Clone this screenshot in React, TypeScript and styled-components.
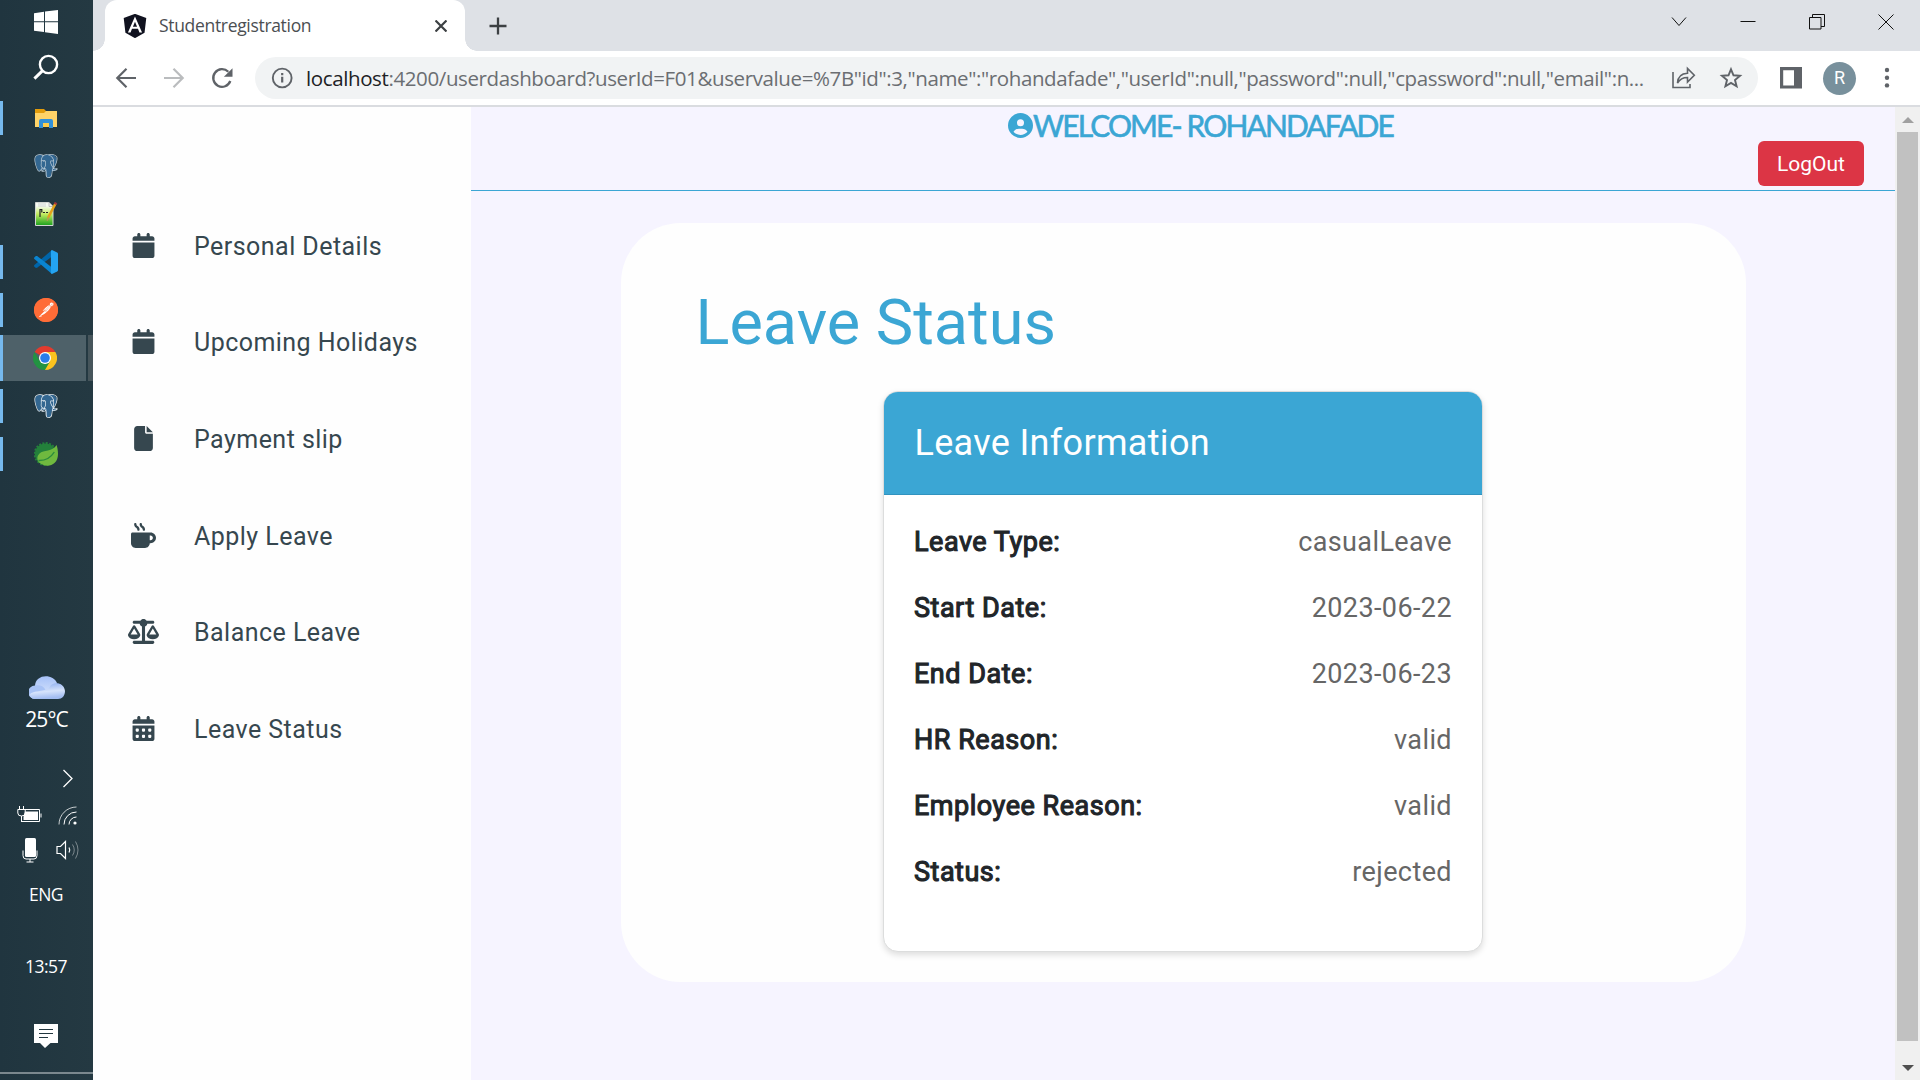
import React from 'react';
import styled, { createGlobalStyle } from 'styled-components';
import type { IconType } from 'react-icons';
import { FaCalendar, FaFile, FaMugHot, FaScaleBalanced, FaCalendarDays, FaCircleUser, FaAngular } from 'react-icons/fa6';
import { SiPostgresql, SiPostman } from 'react-icons/si';

const uiFont = '"Open Sans", "Noto Sans", sans-serif';
const pageFont = 'Roboto, "Liberation Sans", sans-serif';
const blue = '#3ba6d4';

const GlobalStyle = createGlobalStyle`
  *, *::before, *::after { box-sizing: border-box; }
  body { margin: 0; overflow: hidden; }
  svg { display: block; flex: none; }
`;

const Desktop = styled.div`
  display: flex;
  width: 1920px;
  height: 1080px;
  overflow: hidden;
`;

/* ---------- Taskbar ---------- */

const Taskbar = styled.aside`
  display: flex;
  flex-direction: column;
  flex: none;
  width: 93px;
  height: 1080px;
  background: linear-gradient(90deg, #20353f, #243942);
  color: #fff;
  font-family: ${uiFont};
`;

const StartSlot = styled.div<{ $height: number }>`
  display: grid;
  place-items: center;
  height: ${(p) => p.$height}px;
  padding-right: 1px;
`;

const AppList = styled.div`
  margin-top: 11px;
`;

const AppSlot = styled.div<{ $open?: boolean; $active?: boolean }>`
  display: grid;
  place-items: center;
  width: ${(p) => (p.$active ? 86 : 92)}px;
  height: ${(p) => (p.$active ? 46 : 34)}px;
  margin: ${(p) => (p.$active ? '1px 0' : '0 0 14px')};
  padding-right: ${(p) => (p.$active ? 0 : 3)}px;
  border-left: 3px solid ${(p) => (p.$open ? '#76b9ed' : 'transparent')};
  background: ${(p) => (p.$active ? '#4e6169' : 'transparent')};
`;

const ActiveRow = styled.div`
  display: flex;
  justify-content: space-between;
  align-items: center;
  height: 48px;
  margin: -7px 0 7px;
`;

const StackedEdge = styled.div`
  width: 5px;
  height: 46px;
  background: #46555b;
`;

const Weather = styled.div`
  display: flex;
  flex-direction: column;
  align-items: center;
  gap: 4px;
  margin-top: 191px;
`;

const Temperature = styled.span`
  font-size: 21px;
  line-height: 30px;
  letter-spacing: -0.9px;
`;

const Tray = styled.div`
  display: grid;
  grid-template-columns: 28px 28px;
  grid-template-rows: 36px 38px 32px;
  justify-content: center;
  align-items: center;
  justify-items: center;
  column-gap: 10px;
  margin-top: 26px;
  padding-left: 4px;
`;

const TrayLabel = styled.div<{ $top: number }>`
  margin-top: ${(p) => p.$top}px;
  padding-right: 1px;
  font-size: 17.5px;
  line-height: 24px;
  letter-spacing: -0.5px;
  text-align: center;
`;

const Notifications = styled.div`
  display: flex;
  justify-content: center;
  height: 94px;
  margin-top: auto;
  padding: 46px 1px 0 0;
`;

const DesktopEdge = styled.div`
  height: 8px;
  border-top: 2px solid #7b888e;
`;

/* ---------- Browser ---------- */

const Browser = styled.div`
  display: flex;
  flex-direction: column;
  flex: 1;
  min-width: 0;
  background: #fff;
`;

const TabStrip = styled.div`
  display: flex;
  align-items: flex-end;
  height: 51px;
  background: #dee1e6;
`;

const TabCurve = styled.div<{ $side: 'left' | 'right' }>`
  width: 12px;
  height: 12px;
  background: radial-gradient(
    circle at ${(p) => (p.$side === 'left' ? '0 0' : '100% 0')},
    transparent 11.5px,
    #fff 12px
  );
`;

const Tab = styled.div`
  display: flex;
  align-items: center;
  width: 360px;
  height: 51px;
  padding: 0 18px;
  border-radius: 12px 12px 0 0;
  background: #fff;
`;

const TabTitle = styled.span`
  flex: 1;
  margin-left: 12px;
  padding-bottom: 1px;
  color: #4b4e52;
  font: 400 17.5px/24px ${uiFont};
  letter-spacing: -0.32px;
`;

const NewTab = styled.div`
  display: grid;
  place-items: center;
  width: 18px;
  height: 51px;
  margin-left: 12px;
`;

const WindowControls = styled.div`
  display: flex;
  align-items: flex-start;
  gap: 53px;
  height: 51px;
  margin-left: auto;
  padding: 14px 26px 0 0;
`;

const Toolbar = styled.div`
  display: flex;
  align-items: center;
  height: 56px;
  padding: 0 18px 0 21px;
  border-bottom: 2px solid #dadce0;
`;

const NavButtons = styled.div`
  display: flex;
  gap: 24px;
  margin-right: 21px;
`;

const Omnibox = styled.div`
  display: flex;
  flex: none;
  align-items: center;
  width: 1503px;
  height: 42px;
  padding: 0 15px;
  border-radius: 21px;
  background: #f1f3f4;
`;

const Address = styled.div`
  flex: 1;
  margin-left: 12px;
  color: #6b6e72;
  font: 400 20.5px/30px ${uiFont};
  letter-spacing: -0.385px;
  white-space: nowrap;
`;

const Host = styled.span`
  color: #202124;
`;

const OmniboxActions = styled.div`
  display: flex;
  gap: 23px;
`;

const ToolbarActions = styled.div`
  display: flex;
  align-items: center;
  gap: 20px;
  margin-left: 21px;
`;

const Avatar = styled.div`
  display: grid;
  place-items: center;
  width: 33px;
  height: 33px;
  border-radius: 50%;
  background: #78909c;
  color: #fff;
  font: 400 18px/1 ${pageFont};
`;

/* ---------- Page ---------- */

const Viewport = styled.div`
  display: flex;
  flex: 1;
  min-height: 0;
  font-family: ${pageFont};
`;

const Sidebar = styled.nav`
  flex: none;
  width: 378px;
  padding-top: 91px;
  background: #fefefe;
`;

const MenuItem = styled.div`
  display: flex;
  align-items: center;
  height: 96.6px;
  padding-left: 30px;
  color: #36474f;
  font-size: 25px;
  letter-spacing: 0.46px;
`;

const MenuIcon = styled.span`
  display: flex;
  justify-content: center;
  width: 40px;
  margin: 0 31px 2px 0;
`;

const Main = styled.main`
  flex: 1;
  background: #f6f4ff;
`;

const Header = styled.header`
  display: flex;
  flex-direction: column;
  height: 84px;
  border-bottom: 1px solid ${blue};
`;

const Welcome = styled.div`
  display: flex;
  align-items: center;
  height: 34px;
  padding: 3px 0 0 537px;
  color: ${blue};
  font: 400 30px/34px Lato, sans-serif;
  letter-spacing: -1.87px;
  text-transform: uppercase;
  white-space: pre;
  -webkit-text-stroke: 0.6px ${blue};

  svg { stroke: none; }
`;

const WelcomeText = styled.span`
  margin-bottom: 2px;
`;

const LogOut = styled.button`
  align-self: flex-end;
  width: 106px;
  height: 45px;
  margin-right: 31px;
  padding: 1px 0 0;
  border: 0;
  border-radius: 6px;
  background: #dc3545;
  color: #fff;
  font: 400 21px/44px ${pageFont};
`;

const Panel = styled.section`
  width: 1125px;
  height: 759px;
  margin: 32px 0 0 150px;
  padding: 62px 76px 0 74px;
  border-radius: 60px;
  background: #fefefe;
`;

const PanelTitle = styled.h1`
  margin: 0 0 30px;
  padding-left: 0.5px;
  color: ${blue};
  font-size: 63px;
  font-weight: 400;
  line-height: 76px;
`;

const InfoCard = styled.article`
  width: 600px;
  height: 561px;
  margin: 0 auto;
  overflow: hidden;
  border: 1px solid #dcdddd;
  border-radius: 15px;
  background: #fff;
  box-shadow: 0 3px 6px rgba(0, 0, 0, 0.13);
`;

const InfoHeader = styled.h2`
  height: 103px;
  margin: 0;
  padding: 1px 31px 0;
  border-bottom: 1px solid #3193bf;
  background: ${blue};
  color: #fff;
  font-size: 36px;
  font-weight: 400;
  line-height: 101px;
  letter-spacing: 0.32px;
`;

const InfoBody = styled.dl`
  margin: 0;
  padding: 14px 29.5px 0 30.5px;
`;

const InfoRow = styled.div`
  display: flex;
  justify-content: space-between;
  align-items: center;
  height: 66px;
  font-size: 27px;
`;

const Label = styled.dt`
  color: #212529;
  letter-spacing: 0.52px;
  -webkit-text-stroke: 1.1px #212529;
`;

const Value = styled.dd`
  margin: 0;
  color: #666;
  letter-spacing: 0.4px;
`;

const Scrollbar = styled.div`
  display: flex;
  flex-direction: column;
  align-items: center;
  justify-content: space-between;
  width: 25px;
  padding: 10px 0 9px;
  background: #f0f0f0;
`;

const Thumb = styled.div`
  width: 21px;
  height: 909px;
  margin: 9px 0 auto;
  background: #c1c1c1;
`;

/* ---------- Drawings ---------- */

const WindowsLogo = () => (
  <svg width="24" height="24" viewBox="0 0 24 24" fill="#fff">
    <path d="M0 3.2 10 1.8V11.3H0zM11 1.6 24 0V11.3H11zM0 12.3H10V22.1L0 20.8zM11 12.3H24V24L11 22.3z" />
  </svg>
);

const SearchGlyph = () => (
  <svg width="26" height="26" viewBox="0 0 26 26" fill="none" stroke="#fff" strokeWidth="2.4">
    <circle cx="15.5" cy="10.5" r="8.6" />
    <path d="M9.6 16.6 1.4 24.6" strokeWidth="3" />
  </svg>
);

const FolderIcon = () => (
  <svg width="24" height="24" viewBox="0 0 24 24">
    <path d="M1 3h9l2 2v4H1z" fill="#e39c0b" />
    <path d="M1 7h9l2-2h11v16H1z" fill="#ffd368" />
    <path d="M5 22v-7q0-2 2-2h10q2 0 2 2v7h-4v-5H9v5z" fill="#3290d8" />
    <path d="M9 17h6v4H9z" fill="#ffcd4d" />
  </svg>
);

const ElephantLayers = styled.div`
  position: relative;
  width: 24px;
  height: 24px;

  svg { position: absolute; inset: 0; }
`;

const ElephantIcon = ({ line }: { line: string }) => (
  <ElephantLayers>
    <svg width="24" height="24" viewBox="0 0 24 24">
      <path d="M5 .7 9 1.2 12 1 16 .5l4 .7 2.8 3-.6 5-2.5 5 2.8.8-2 2-3 .4-.5 4.5-2 1.6-2.6-.4L11.6 16l-3 .6-.8-1.2L5 17.6 3 14 .9 7 1.5 2.6z" fill="#336791" />
    </svg>
    <SiPostgresql size={24} color={line} />
  </ElephantLayers>
);

const NotepadIcon = () => (
  <svg width="24" height="24" viewBox="0 0 24 24">
    <defs>
      <linearGradient id="sheet" x1="0" y1="0" x2="0" y2="1">
        <stop offset="0.15" stopColor="#f7fbf4" />
        <stop offset="0.5" stopColor="#c4ec60" />
        <stop offset="1" stopColor="#199f1d" />
      </linearGradient>
    </defs>
    <path d="M1.5.5H15l4 4V23.5H1.5z" fill="url(#sheet)" stroke="#d3d5d3" />
    <path d="M15 .5v4h4" fill="#eee" stroke="#aaa" strokeWidth=".7" />
    <path d="M4 2h8M4 4h8" stroke="#b9bdc0" strokeWidth=".6" />
    <path d="M6 15V7.500h1.800v3M9 10.500h2M12 10.500h2" stroke="#222" strokeWidth="1.2" fill="none" />
    <path d="M21.5 1.5 14 16" stroke="#e3a21c" strokeWidth="2.6" />
    <path d="m21 2.4 1-1.9" stroke="#a3353b" strokeWidth="2.8" />
    <path d="m14.7 15-1.6 3.8" stroke="#be945a" strokeWidth="1.3" />
  </svg>
);

const CodeIcon = () => (
  <svg width="24" height="24" viewBox="0 0 24 24">
    <path d="M18 0v6.600L3.100 17.800 1.900 17.900.3 16.400q-.6-.8.1-1.500z" fill="#0065a9" />
    <path d="M.3 7.600 1.900 6.100h1.200L18 17.400V24L.4 9.100Q-.2 8.300.3 7.600z" fill="#0a84d0" />
    <path d="M18 24q-1.100-.2-1.100-1.500V1.500Q16.900.2 18 0l5.100 2.400q.9.500.9 1.400v16.400q0 .9-.9 1.400z" fill="#24a4f2" />
  </svg>
);

const PostmanBack = styled.div`
  display: grid;
  place-items: center;
  width: 24px;
  height: 24px;
  border-radius: 50%;
  background: radial-gradient(circle, #fff 10px, #ff6c37 11px);
`;

const ChromeIcon = () => (
  <svg width="24" height="24" viewBox="0 0 24 24">
    <path d="M12 12 1.600 6A12 12 0 0 1 22.400 6z" fill="#e33b2e" />
    <path d="M12 12V6h10.400A12 12 0 0 1 12 24z" fill="#fcc31e" />
    <path d="M1.600 6 6.800 15 12 18l5.200-3L12 24A12 12 0 0 1 1.600 6z" fill="#229342" />
    <circle cx="12" cy="12" r="6" fill="#fff" />
    <circle cx="12" cy="12" r="4.800" fill="#2a7de9" />
  </svg>
);

const SpringIcon = () => (
  <svg width="24" height="24" viewBox="0 0 24 24">
    <circle cx="11.500" cy="12" r="10.600" fill="#23803b" />
    <circle cx="11.500" cy="12" r="11" fill="none" stroke="#23803b" strokeWidth="1.800" strokeDasharray="2 1.450" />
    <path d="M22.500 3C18.500 10 9.500 7.500 5.500 11.500c-3 3-2.500 6.500-.5 9 7 6 19 3.500 19-8.500 0-4-.7-6.700-1.500-9z" fill="#6fb93f" />
    <path d="M4.500 18.500c7 .2 12-2.200 15.800-8.500" fill="none" stroke="#2b8b3d" strokeWidth="1.400" />
  </svg>
);

const CloudIcon = () => (
  <svg width="36" height="24" viewBox="0 0 36 24">
    <defs>
      <linearGradient id="cloudBack" x1="0" y1="0" x2="0" y2="1">
        <stop offset="0" stopColor="#a6c1f8" />
        <stop offset="1" stopColor="#d7e4fb" />
      </linearGradient>
      <linearGradient id="cloudFront" x1="0" y1="0" x2="0.2" y2="1">
        <stop offset="0" stopColor="#86a9ee" />
        <stop offset="0.6" stopColor="#d6e3fb" />
        <stop offset="1" stopColor="#a3bdf1" />
      </linearGradient>
    </defs>
    <path d="M6 10C6-2 24-3 28 7l-4 13H8z" fill="url(#cloudBack)" />
    <path d="M6 23a6.500 6.500 0 0 1 0-13.500c5-1 8.500 1 10 3.500l4 10z" fill="#a9c3f5" />
    <path d="M6 23c-3 0-5-2-5.500-4.500C5 14 12 16 20 12.500 22 5 35 5 36 15c0 5-3 8-7 8z" fill="url(#cloudFront)" />
  </svg>
);

const BatteryIcon = () => (
  <svg width="25" height="18" viewBox="0 0 25 18" fill="none" stroke="#fff">
    <path d="M7.500 3.500h15v12H4.500v-4M24 7.500v4" />
    <path d="M8 5.500h13v8.500H6.500v-3z" fill="#fff" stroke="none" />
    <path d="M2.500 0v3.500M6.500 0v3.500M.8 3.500h7.400v3.500q0 3-3.700 3t-3.700-3zM4.500 10v6" />
  </svg>
);

const WifiIcon = () => (
  <svg width="20" height="19" viewBox="0 0 20 19" fill="none" stroke="#fff">
    <path d="M1 18.500A17.500 17.500 0 0 1 18.500 1" opacity=".75" />
    <path d="M6 18.500A12.500 12.500 0 0 1 18.500 6" />
    <path d="M11 18.500a7.500 7.500 0 0 1 7.500-7.500" />
    <circle cx="17" cy="17" r="1.600" fill="#fff" stroke="none" />
  </svg>
);

const MicIcon = () => (
  <svg width="16" height="25" viewBox="0 0 16 25" fill="none" stroke="#fff">
    <rect x="3" y="0" width="11" height="19" rx="1.500" fill="#fff" stroke="none" />
    <path d="M1 12.500v5q0 3.500 3 3.500h8q3 0 3-3.500v-5M8 21v3M4.500 24h7" />
  </svg>
);

const SpeakerIcon = () => (
  <svg width="24" height="20" viewBox="0 0 24 20" fill="none" stroke="#fff">
    <path d="M1 6.500h3.500L9.500 1.500v17l-5-5H1z" strokeWidth="1.200" />
    <path d="M13 7.500q1.500 2.500 0 5" strokeWidth="1.200" />
    <path d="M16.500 4.500q3.500 5.500 0 11M19.500 1.500q5 8.500 0 17" opacity=".4" />
  </svg>
);

const NoteIcon = () => (
  <svg width="24" height="24" viewBox="0 0 24 24">
    <path d="M0 0h24v19h-7.500L11 24l-5-5H0z" fill="#fff" />
    <path d="M5 5.500h14M5 9.500h14M5 13.500h9" stroke="#22373f" />
  </svg>
);

const TrayChevron = () => (
  <svg width="12" height="19" viewBox="0 0 12 19" fill="none" stroke="#fff" strokeWidth="1.300">
    <path d="m1.500 1 8.500 8.500L1.500 18" />
  </svg>
);

const Stroke = ({ d, color = '#5f6368' }: { d: string; color?: string }) => (
  <svg width="24" height="24" viewBox="0 0 24 24" fill="none" stroke={color} strokeWidth="2.2">
    <path d={d} />
  </svg>
);

const ReloadIcon = () => (
  <svg width="24" height="24" viewBox="0 0 24 24" fill="none" stroke="#5f6368" strokeWidth="2.300">
    <path d="M20.300 15a8.800 8.800 0 1 1-2-9.200" />
    <path d="M22.500 2.200v8.600h-8.600z" fill="#5f6368" stroke="none" />
  </svg>
);

const InfoIcon = () => (
  <svg width="24" height="24" viewBox="0 0 24 24" fill="none" stroke="#5f6368" strokeWidth="1.900">
    <circle cx="12.200" cy="12" r="9.400" />
    <path d="M12.200 10.800v5.700M12.200 7v2.200" strokeWidth="2.200" />
  </svg>
);

const ShareIcon = () => (
  <svg width="24" height="24" viewBox="0 0 24 24" fill="none" stroke="#5f6368" strokeWidth="1.600">
    <path d="M1 6v15.500h17V18" />
    <path d="M5.500 17c.3-6 3.500-9.500 10-9.800V2.500l6.800 6.800-6.800 6.800v-4.600c-4.500 0-7.600 1.500-10 5.500z" />
  </svg>
);

const StarIcon = () => (
  <svg width="24" height="24" viewBox="0 0 24 24" fill="none" stroke="#5f6368" strokeWidth="1.900">
    <path d="m12 3.300 2.500 6 6.500.5-5 4.200 1.600 6.300L12 16.900l-5.600 3.400L8 14 3 9.800l6.500-.5z" />
  </svg>
);

const SidePanelIcon = () => (
  <svg width="24" height="24" viewBox="0 0 24 24">
    <path d="M1 1h22v21.500H1zM4.200 4.200v15.200h10.800V4.200z" fill="#5f6368" fillRule="evenodd" />
  </svg>
);

const DotsIcon = () => (
  <svg width="24" height="24" viewBox="0 0 24 24" fill="#5f6368">
    <circle cx="11" cy="4" r="2.200" />
    <circle cx="11" cy="11.700" r="2.200" />
    <circle cx="11" cy="19.400" r="2.200" />
  </svg>
);

const ControlIcon = ({ d }: { d: string }) => (
  <svg width="16" height="16" viewBox="0 0 16 16" fill="none" stroke="#111">
    <path d={d} />
  </svg>
);

const Arrow = ({ up }: { up?: boolean }) => (
  <svg width="12" height="6" viewBox="0 0 12 6">
    <path d={up ? 'M6 0l6 6H0z' : 'M0 0h12L6 6z'} fill={up ? '#a0a0a0' : '#505050'} />
  </svg>
);

/* ---------- Data ---------- */

const menu: { label: string; icon: IconType; size: number }[] = [
  { label: 'Personal Details', icon: FaCalendar, size: 25 },
  { label: 'Upcoming Holidays', icon: FaCalendar, size: 25 },
  { label: 'Payment slip', icon: FaFile, size: 25 },
  { label: 'Apply Leave', icon: FaMugHot, size: 25 },
  { label: 'Balance Leave', icon: FaScaleBalanced, size: 31 },
  { label: 'Leave Status', icon: FaCalendarDays, size: 25 },
];

const details: [string, string][] = [
  ['Leave Type:', 'casualLeave'],
  ['Start Date:', '2023-06-22'],
  ['End Date:', '2023-06-23'],
  ['HR Reason:', 'valid'],
  ['Employee Reason:', 'valid'],
  ['Status:', 'rejected'],
];

export default function App() {
  return (
    <Desktop>
      <GlobalStyle />
      <Taskbar>
        <StartSlot $height={44}><WindowsLogo /></StartSlot>
        <StartSlot $height={46}><SearchGlyph /></StartSlot>
        <AppList>
          <AppSlot $open><FolderIcon /></AppSlot>
          <AppSlot><ElephantIcon line="#b9cad6" /></AppSlot>
          <AppSlot><NotepadIcon /></AppSlot>
          <AppSlot $open><CodeIcon /></AppSlot>
          <AppSlot $open><PostmanBack><SiPostman size={24} color="#ff6c37" /></PostmanBack></AppSlot>
          <ActiveRow>
            <AppSlot $open $active><ChromeIcon /></AppSlot>
            <StackedEdge />
          </ActiveRow>
          <AppSlot $open><ElephantIcon line="#e8eff4" /></AppSlot>
          <AppSlot $open><SpringIcon /></AppSlot>
        </AppList>
        <Weather>
          <CloudIcon />
          <Temperature>25°C</Temperature>
        </Weather>
        <Tray>
          <span />
          <TrayChevron />
          <BatteryIcon />
          <WifiIcon />
          <MicIcon />
          <SpeakerIcon />
        </Tray>
        <TrayLabel $top={16}>ENG</TrayLabel>
        <TrayLabel $top={48}>13:57</TrayLabel>
        <Notifications><NoteIcon /></Notifications>
        <DesktopEdge />
      </Taskbar>

      <Browser>
        <TabStrip>
          <TabCurve $side="left" />
          <Tab>
            <FaAngular size={24} color="#10121f" viewBox="28 35 392 442" />
            <TabTitle>Studentregistration</TabTitle>
            <svg width="12" height="12" viewBox="0 0 12 12" stroke="#3c4043" strokeWidth="2.200">
              <path d="m.5.5 11 11M11.500.5.5 11.500" />
            </svg>
          </Tab>
          <TabCurve $side="right" />
          <NewTab>
            <svg width="18" height="18" viewBox="0 0 18 18" stroke="#3c4043" strokeWidth="2.300">
              <path d="M9 .5v17M.5 9h17" />
            </svg>
          </NewTab>
          <WindowControls>
            <ControlIcon d="m1 3.500 7 8 7-8" />
            <ControlIcon d="M.5 7.500h15" />
            <ControlIcon d="M.5 3.500h11.500v11.500H.5zM3.500 3.500v-3h12v12h-3.500" />
            <ControlIcon d="m.5.500 15 15M15.500.500l-15 15" />
          </WindowControls>
        </TabStrip>
        <Toolbar>
          <NavButtons>
            <Stroke d="M22 12H3.500M12.500 2.800 3.300 12l9.200 9.200" />
            <Stroke d="M2 12h18.500M11.500 2.800l9.200 9.200-9.200 9.200" color="#babcbe" />
            <ReloadIcon />
          </NavButtons>
          <Omnibox>
            <InfoIcon />
            <Address>
              <Host>localhost</Host>
              {':4200/userdashboard?userId=F01&uservalue=%7B"id":3,"name":"rohandafade","userId":null,"password":null,"cpassword":null,"email":n...'}
            </Address>
            <OmniboxActions>
              <ShareIcon />
              <StarIcon />
            </OmniboxActions>
          </Omnibox>
          <ToolbarActions>
            <SidePanelIcon />
            <Avatar>R</Avatar>
            <DotsIcon />
          </ToolbarActions>
        </Toolbar>

        <Viewport>
          <Sidebar>
            {menu.map(({ label, icon: Icon, size }) => (
              <MenuItem key={label}>
                <MenuIcon><Icon size={size} /></MenuIcon>
                {label}
              </MenuItem>
            ))}
          </Sidebar>
          <Main>
            <Header>
              <Welcome>
                <FaCircleUser size={25} />
                <WelcomeText>Welcome- rohandafade</WelcomeText>
              </Welcome>
              <LogOut>LogOut</LogOut>
            </Header>
            <Panel>
              <PanelTitle>Leave Status</PanelTitle>
              <InfoCard>
                <InfoHeader>Leave Information</InfoHeader>
                <InfoBody>
                  {details.map(([label, value]) => (
                    <InfoRow key={label}>
                      <Label>{label}</Label>
                      <Value>{value}</Value>
                    </InfoRow>
                  ))}
                </InfoBody>
              </InfoCard>
            </Panel>
          </Main>
          <Scrollbar>
            <Arrow up />
            <Thumb />
            <Arrow />
          </Scrollbar>
        </Viewport>
      </Browser>
    </Desktop>
  );
}
